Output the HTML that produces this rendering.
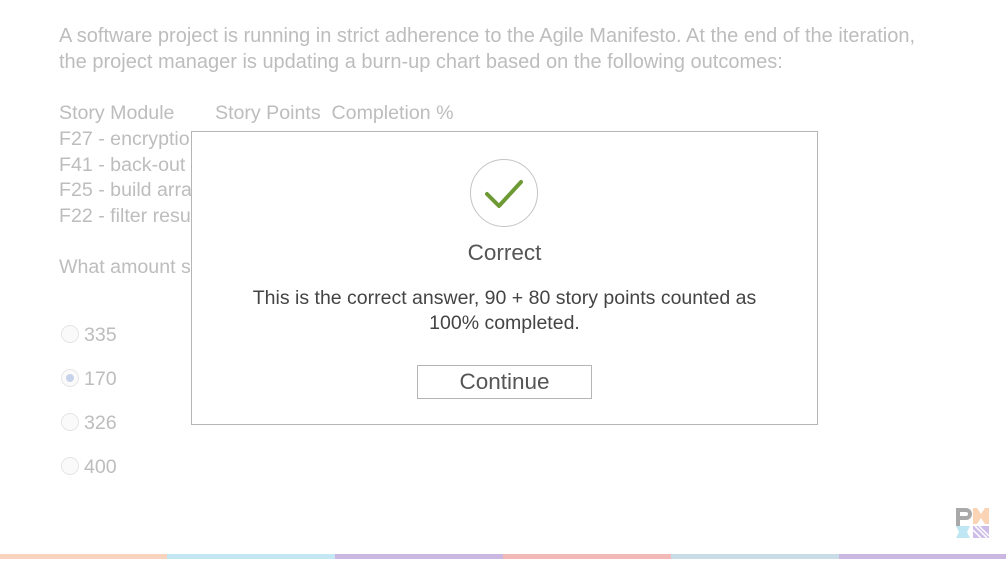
<!DOCTYPE html>
<html><head><style>
body{margin:0;width:1006px;height:564px;background:#fff;position:relative;overflow:hidden;font-family:"Liberation Sans","DejaVu Sans",sans-serif;}
.t{position:absolute;color:#bdbdbd;font-size:19.6px;white-space:nowrap;}
.r{position:absolute;left:61px;width:16px;height:16px;border-radius:50%;border:1px solid #e6e6e6;background:#fafafa;}
.modal{position:absolute;left:191px;top:131px;width:625px;height:292px;border:1px solid #b5b5b5;background:#fff;}
.bar{position:absolute;top:554px;height:5px;}
</style></head><body>
<div class="t" style="left:59px;top:25px;font-size:20px">A software project is running in strict adherence to the Agile Manifesto. At the end of the iteration,</div>
<div class="t" style="left:59px;top:51px;font-size:20px">the project manager is updating a burn-up chart based on the following outcomes:</div>
<div class="t" style="left:59px;top:102px">Story Module</div>
<div class="t" style="left:215px;top:102px">Story Points&nbsp; Completion %</div>
<div class="t" style="left:59px;top:128px">F27 - encryption</div>
<div class="t" style="left:59px;top:154px">F41 - back-out</div>
<div class="t" style="left:59px;top:179px">F25 - build array</div>
<div class="t" style="left:59px;top:205px">F22 - filter results</div>
<div class="t" style="left:59px;top:256px">What amount s</div>
<div class="r" style="top:325px"></div><div class="t" style="left:84px;top:324px">335</div>
<div class="r" style="top:369px"><div style="position:absolute;left:4px;top:4px;width:8px;height:8px;border-radius:50%;background:#c7d3ea"></div></div><div class="t" style="left:84px;top:368px">170</div>
<div class="r" style="top:413px"></div><div class="t" style="left:84px;top:412px">326</div>
<div class="r" style="top:457px"></div><div class="t" style="left:84px;top:456px">400</div>
<div class="modal">
<svg style="position:absolute;left:277px;top:26px" width="70" height="70"><circle cx="35" cy="35" r="33.5" fill="none" stroke="#c4c4c4" stroke-width="1"/><path d="M18 36 L30 48 L52 24" fill="none" stroke="#6e9a35" stroke-width="4" stroke-linecap="round" stroke-linejoin="round"/></svg>
<div style="position:absolute;left:0;width:625px;top:108px;text-align:center;font-size:22.5px;color:#555">Correct</div>
<div style="position:absolute;left:0;width:625px;top:154px;text-align:center;font-size:19.5px;color:#444;line-height:25px">This is the correct answer, 90 + 80 story points counted as<br>100% completed.</div>
<div style="position:absolute;left:225px;top:233px;width:173px;height:32px;border:1px solid #b5b5b5;text-align:center;line-height:32px;font-size:22.5px;color:#555">Continue</div>
</div>
<svg style="position:absolute;left:954px;top:506px" width="36" height="34">
<path d="M2 2h10a6 6 0 0 1 0 12h-6v6h-4z M6 6v4h6a2 2 0 0 0 0-4z" fill="#a9a9a9" fill-rule="evenodd"/>
<path d="M19 2h4l4 6 4-6h4v16h-4l-4-6-4 6h-4z" fill="#fbd3b5"/>
<path d="M2 20h14l-3 6 3 6H2l3-6z" fill="#bfe6f3"/>
<path d="M19 20h16v12H19z" fill="#cdbde8"/>
<path d="M21 20l12 12M25 20l10 10M19 24l8 8" stroke="#fff" stroke-width="1.5"/>
</svg>
<div class="bar" style="left:0;width:167px;background:#f8d3bd"></div>
<div class="bar" style="left:167px;width:168px;background:#c4e8f3"></div>
<div class="bar" style="left:335px;width:168px;background:#cab8e3"></div>
<div class="bar" style="left:503px;width:168px;background:#f2b9b6"></div>
<div class="bar" style="left:671px;width:168px;background:#c9dde6"></div>
<div class="bar" style="left:839px;width:167px;background:#cab8e3"></div>
</body></html>
